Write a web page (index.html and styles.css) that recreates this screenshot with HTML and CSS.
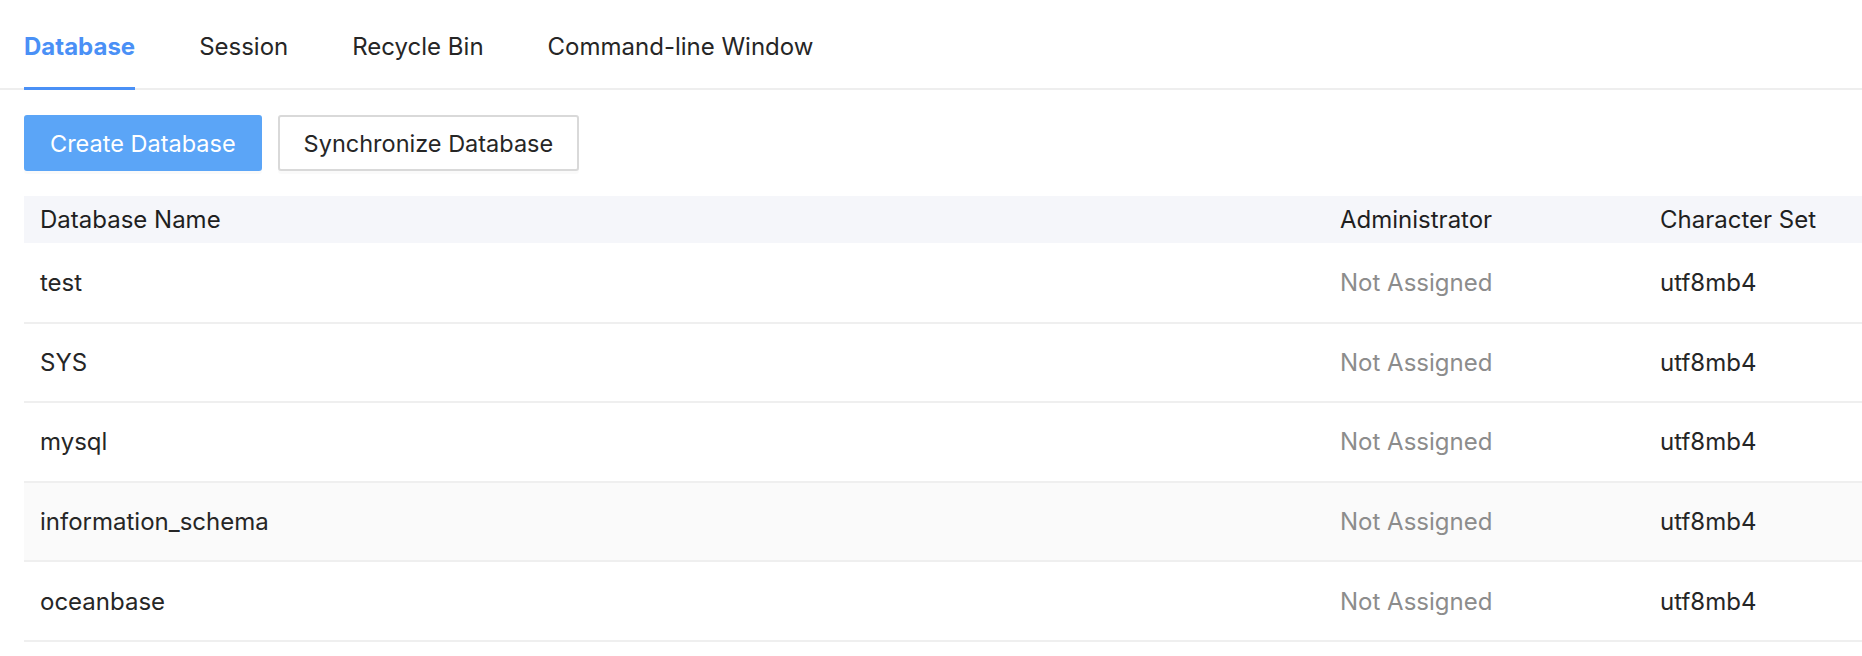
FILE: index.html
```html
<!DOCTYPE html>
<html lang="en">
<head>
<meta charset="utf-8">
<title>Database</title>
<link rel="stylesheet" href="styles.css">
</head>
<body>
<div class="page">
  <nav class="tabs">
    <div class="tab tab-active">Database</div>
    <div class="tab">Session</div>
    <div class="tab">Recycle Bin</div>
    <div class="tab">Command-line Window</div>
  </nav>
  <div class="content">
    <div class="toolbar">
      <button class="btn btn-primary">Create Database</button>
      <button class="btn btn-default">Synchronize Database</button>
    </div>
    <table class="table">
      <colgroup>
        <col class="col-name">
        <col class="col-admin">
        <col class="col-charset">
      </colgroup>
      <thead>
        <tr>
          <th>Database Name</th>
          <th>Administrator</th>
          <th>Character Set</th>
        </tr>
      </thead>
      <tbody>
        <tr><td>test</td><td class="muted">Not Assigned</td><td>utf8mb4</td></tr>
        <tr><td>SYS</td><td class="muted">Not Assigned</td><td>utf8mb4</td></tr>
        <tr><td>mysql</td><td class="muted">Not Assigned</td><td>utf8mb4</td></tr>
        <tr class="row-hover"><td>information_schema</td><td class="muted">Not Assigned</td><td>utf8mb4</td></tr>
        <tr><td>oceanbase</td><td class="muted">Not Assigned</td><td>utf8mb4</td></tr>
      </tbody>
    </table>
  </div>
</div>
</body>
</html>
```
FILE: styles.css
```css
* { box-sizing: border-box; }
html, body {
  margin: 0;
  padding: 0;
  background: #ffffff;
}
body {
  font-family: Inter, "Noto Sans", "Liberation Sans", sans-serif;
  color: #262626;
  overflow: hidden;
}
.page {
  width: 100%;
}
.tabs {
  display: flex;
  gap: 64px;
  padding-left: 24px;
  height: 90px;
  box-shadow: inset 0 -2px 0 #eeeeee;
}
.tab {
  font-size: 24px;
  line-height: 30px;
  padding-top: 32px;
  height: 90px;
  color: #262626;
  border-bottom: 3px solid transparent;
}
.tab-active {
  color: #4a90f6;
  font-weight: 700;
  border-bottom-color: #4a90f6;
}
.content {
  padding-left: 24px;
}
.toolbar {
  display: flex;
  gap: 16px;
  padding-top: 25px;
  padding-bottom: 25px;
}
.btn {
  font-family: inherit;
  font-size: 23.5px;
  height: 56px;
  padding: 0 24px;
  border-radius: 3px;
  cursor: pointer;
  box-shadow: 0 3px 0 rgba(0, 0, 0, 0.02);
}
.btn-primary {
  background: #5ba5f7;
  border: 2px solid #5ba5f7;
  color: #ffffff;
}
.btn-default {
  background: #ffffff;
  border: 2px solid #d9d9d9;
  color: #262626;
}
.table {
  width: 100%;
  border-collapse: collapse;
  table-layout: fixed;
  font-size: 24px;
}
.col-name { width: 1300px; }
.col-admin { width: 320px; }
.table th {
  background: #f5f6fa;
  font-weight: 400;
  text-align: left;
  height: 47px;
  padding: 0 16px;
  color: #1f1f1f;
}
.table td {
  height: 79.6px;
  padding: 0 16px;
  border-bottom: 2px solid #efefef;
  color: #262626;
}
.table td.muted {
  color: #8c8c8c;
}
.row-hover td {
  background: #fafafa;
}
```
